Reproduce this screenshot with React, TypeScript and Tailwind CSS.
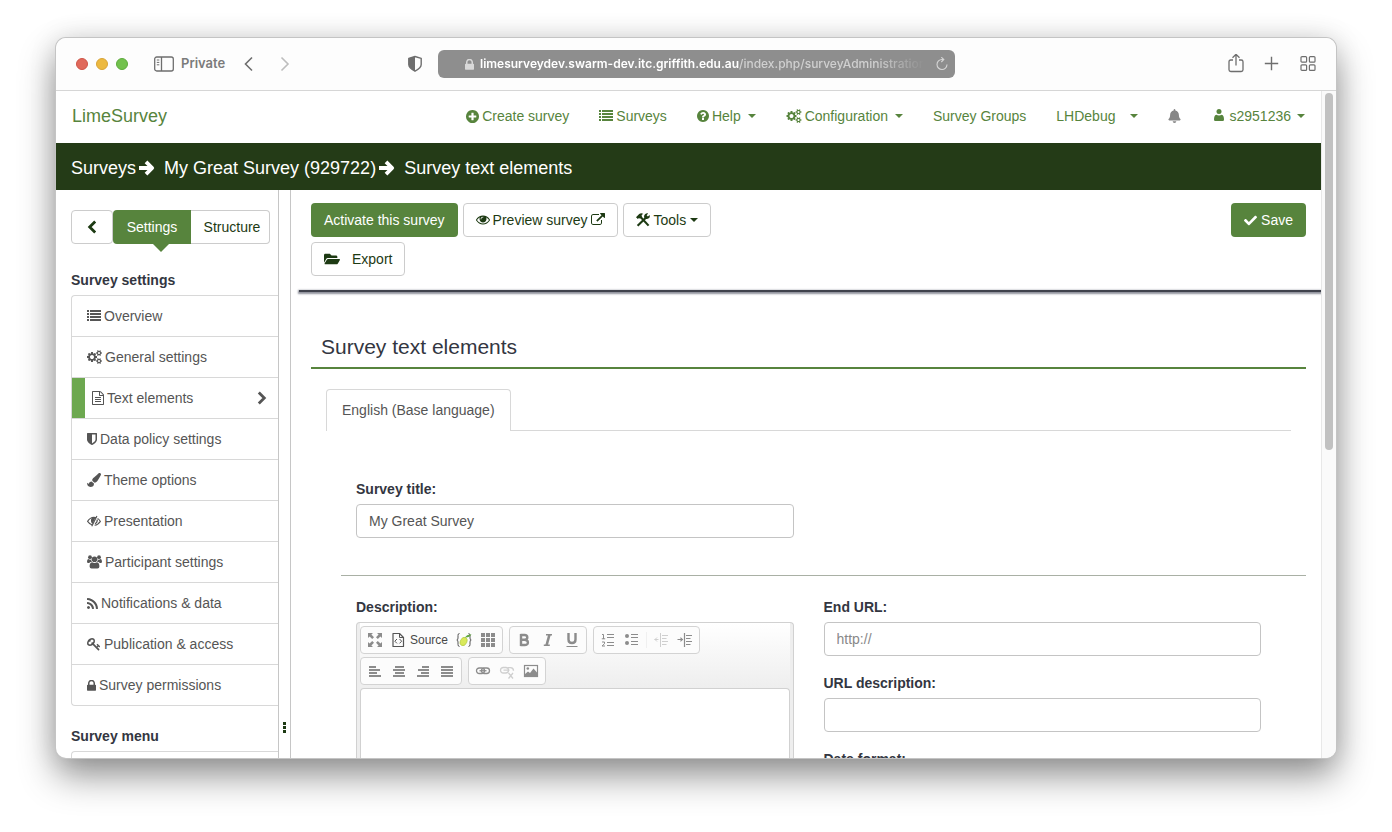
import type { ReactNode } from "react";
import { FaBell, FaCheck, FaFolderOpen, FaPaintBrush } from "react-icons/fa";

const COGS =
  "M896 896q0-106-75-181t-181-75-181 75-75 181 75 181 181 75 181-75 75-181zm768 512q0-52-38-90t-90-38-90 38-38 90q0 53 37.5 90.5t90.5 37.5 90.5-37.5 37.5-90.5zm0-1024q0-52-38-90t-90-38-90 38-38 90q0 53 37.5 90.5t90.5 37.5 90.5-37.5 37.5-90.5zm-384 421v185q0 10-7 19.5t-16 10.5l-155 24q-11 35-32 76 34 48 90 115 7 11 7 20 0 12-7 19-23 30-82.5 89.5t-78.5 59.5q-11 0-21-7l-115-90q-37 19-77 31-11 108-23 155-7 24-30 24h-186q-11 0-20-7.5t-10-17.5l-23-153q-34-10-75-31l-118 89q-7 7-20 7-11 0-21-8-144-133-144-160 0-9 7-19 10-14 41-53t47-61q-23-44-35-82l-152-24q-10-1-17-9.5t-7-19.5v-185q0-10 7-19.5t16-10.5l155-24q11-35 32-76-34-48-90-115-7-11-7-20 0-12 7-20 22-30 82-89t79-59q11 0 21 7l115 90q34-18 77-32 11-108 23-154 7-24 30-24h186q11 0 20 7.5t10 17.5l23 153q34 10 75 31l118-89q8-7 20-7 11 0 21 8 144 133 144 160 0 8-7 19-12 16-42 54t-45 60q23 48 34 82l152 23q10 2 17 10.5t7 19.5zm640 533v140q0 16-149 31-12 27-30 52 51 113 51 138 0 4-4 7-122 71-124 71-8 0-46-47t-52-68q-20 2-30 2t-30-2q-14 21-52 68t-46 47q-2 0-124-71-4-3-4-7 0-25 51-138-18-25-30-52-149-15-149-31v-140q0-16 149-31 13-29 30-52-51-113-51-138 0-4 4-7 4-2 35-20t59-34 30-16q8 0 46 46.5t52 67.5q20-2 30-2t30 2q51-71 92-112l6-2q4 0 124 70 4 3 4 7 0 25-51 138 17 23 30 52 149 15 149 31zm0-1024v140q0 16-149 31-12 27-30 52 51 113 51 138 0 4-4 7-122 71-124 71-8 0-46-47t-52-68q-20 2-30 2t-30-2q-14 21-52 68t-46 47q-2 0-124-71-4-3-4-7 0-25 51-138-18-25-30-52-149-15-149-31v-140q0-16 149-31 13-29 30-52-51-113-51-138 0-4 4-7 4-2 35-20t59-34 30-16q8 0 46 46.5t52 67.5q20-2 30-2t30 2q51-71 92-112l6-2q4 0 124 70 4 3 4 7 0 25-51 138 17 23 30 52 149 15 149 31z";
const KEY =
  "M832 512q0-80-56-136t-136-56-136 56-56 136q0 42 19 83-41-19-83-19-80 0-136 56t-56 136 56 136 136 56 136-56 56-136q0-42-19-83 41 19 83 19 80 0 136-56t56-136zm851 704q0 17-49 66t-66 49q-9 0-28.5-16t-36.5-33-38.5-40-24.5-26l-96 96 220 220q28 28 28 68 0 42-39 81t-81 39q-40 0-68-28l-671-671q-176 131-365 131-163 0-265.5-102.5t-102.5-265.5q0-160 95-313t248-248 313-95q163 0 265.5 102.5t102.5 265.5q0 189-131 365l355 355 96-96q-3-3-26-24.5t-40-38.5-33-36.5-16-28.5q0-17 49-66t66-49q13 0 23 10 6 6 46 44.5t82 79.5 86.5 86 73 78 28.5 41z";
const EYE =
  "M1664 960q-152-236-381-353 61 104 61 225 0 185-131.5 316.5t-316.5 131.5-316.5-131.5-131.5-316.5q0-121 61-225-229 117-381 353 133 205 333.5 326.5t434.5 121.5 434.5-121.5 333.5-326.5zm-720-384q0-20-14-34t-34-14q-125 0-214.5 89.5t-89.5 214.5q0 20 14 34t34 14 34-14 14-34q0-86 61-147t147-61q20 0 34-14t14-34zm848 384q0 34-20 69-140 230-376.5 368.5t-499.5 138.5-499.5-139-376.5-368q-20-35-20-69t20-69q140-229 376.5-368t499.5-139 499.5 139 376.5 368q20 35 20 69z";
const EXTERNAL =
  "M1408 928v320q0 119-84.5 203.5t-203.5 84.5h-832q-119 0-203.5-84.5t-84.5-203.5v-832q0-119 84.5-203.5t203.5-84.5h704q14 0 23 9t9 23v64q0 14-9 23t-23 9h-704q-66 0-113 47t-47 113v832q0 66 47 113t113 47h832q66 0 113-47t47-113v-320q0-14 9-23t23-9h64q14 0 23 9t9 23zm384-864v512q0 26-19 45t-45 19-45-19l-176-176-652 652q-10 10-23 10t-23-10l-114-114q-10-10-10-23t10-23l652-652-176-176q-19-19-19-45t19-45 45-19h512q26 0 45 19t19 45z";
const LOCK =
  "M640 768h512v-192q0-106-75-181t-181-75-181 75-75 181v192zm832 96v576q0 40-28 68t-68 28h-960q-40 0-68-28t-28-68v-576q0-40 28-68t68-28h32v-192q0-184 132-316t316-132 316 132 132 316v192h32q40 0 68 28t28 68z";
const RSS =
  "M576 1344q0 80-56 136t-136 56-136-56-56-136 56-136 136-56 136 56 56 136zm512 123q2 28-17 48-18 21-47 21h-135q-25 0-43-16.5t-20-41.5q-22-229-184.5-391.5t-391.5-184.5q-25-2-41.5-20t-16.5-43v-135q0-29 21-47 17-17 43-17h5q160 13 306 80.5t259 181.5q114 113 181.5 259t80.5 306zm512 2q2 27-18 47-18 20-46 20h-143q-26 0-44.5-17.5t-19.5-42.5q-12-215-101-408.5t-231.5-336-336-231.5-408.5-102q-25-1-42.5-19.5t-17.5-43.5v-143q0-28 20-46 18-18 44-18h3q262 13 501.5 120t425.5 294q187 186 294 425.5t120 501.5z";
const SHIELD =
  "M1344 960v-640h-448v1137q119-63 213-137 235-184 235-360zm192-768v768q0 86-33.5 170.5t-83 150-118 127.5-126.5 103-121 77.5-89.5 49.5-42.5 20q-12 6-26 6t-26-6q-16-7-42.5-20t-89.5-49.5-121-77.5-126.5-103-118-127.5-83-150-33.5-170.5v-768q0-26 19-45t45-19h1152q26 0 45 19t19 45z";
const FILE =
  "M1596 380q28 28 48 76t20 88v1152q0 40-28 68t-68 28h-1344q-40 0-68-28t-28-68v-1600q0-40 28-68t68-28h896q40 0 88 20t76 48zm-444-244v376h376q-10-29-22-41l-313-313q-12-12-41-22zm384 1528v-1024h-416q-40 0-68-28t-28-68v-416h-768v1536h1280zm-1024-864q0-14 9-23t23-9h704q14 0 23 9t9 23v64q0 14-9 23t-23 9h-704q-14 0-23-9t-9-23v-64zm736 224q14 0 23 9t9 23v64q0 14-9 23t-23 9h-704q-14 0-23-9t-9-23v-64q0-14 9-23t23-9h704zm0 256q14 0 23 9t9 23v64q0 14-9 23t-23 9h-704q-14 0-23-9t-9-23v-64q0-14 9-23t23-9h704z";
const QUESTION =
  "M1024 1376v-192q0-14-9-23t-23-9h-192q-14 0-23 9t-9 23v192q0 14 9 23t23 9h192q14 0 23-9t9-23zm256-672q0-88-55.5-163t-138.5-116-170-41q-243 0-371 213-15 24 8 42l132 100q7 6 19 6 16 0 25-12 53-68 86-92 34-24 86-24 48 0 85.5 26t37.5 59q0 38-20 61t-68 45q-63 28-115.5 86.5t-52.5 125.5v36q0 14 9 23t23 9h192q14 0 23-9t9-23q0-19 21.5-49.5t54.5-49.5q32-18 49-28.5t46-35 44.5-48 28-60.5 12.5-81zm384 192q0 209-103 385.5t-279.5 279.5-385.5 103-385.5-103-279.5-279.5-103-385.5 103-385.5 279.5-279.5 385.5-103 385.5 103 279.5 279.5 103 385.5z";
const PLUS =
  "M1344 960v-128q0-26-19-45t-45-19h-256v-256q0-26-19-45t-45-19h-128q-26 0-45 19t-19 45v256h-256q-26 0-45 19t-19 45v128q0 26 19 45t45 19h256v256q0 26 19 45t45 19h128q26 0 45-19t19-45v-256h256q26 0 45-19t19-45zm320-64q0 209-103 385.5t-279.5 279.5-385.5 103-385.5-103-279.5-279.5-103-385.5 103-385.5 279.5-279.5 385.5-103 385.5 103 279.5 279.5 103 385.5z";

function Glyph({ d, box, className }: { d: string; box: string; className: string }) {
  return (
    <svg viewBox={box} className={className} fill="currentColor" aria-hidden="true">
      <path d={d} />
    </svg>
  );
}

function ListIcon() {
  return (
    <svg viewBox="0 0 14 14" className="h-3.5 w-3.5" fill="currentColor" aria-hidden="true">
      <path d="M0 1h2v2H0zM3 1h11v2H3zM0 4h2v2H0zM3 4h11v2H3zM0 7h2v2H0zM3 7h11v2H3zM0 10h2v2H0zM3 10h11v2H3z" />
    </svg>
  );
}

function EyeSlash() {
  return (
    <svg viewBox="0 0 14 14" className="h-3.5 w-3.5" fill="none" stroke="currentColor" aria-hidden="true">
      <path d="M5.2 11Q2.4 10 .6 7.4Q3 3.4 7 3.3Q8.4 3.3 9.2 3.7M10.6 4.4Q12.4 5.6 13.4 7.4Q11.3 10.8 7.6 11.3" strokeWidth="1.1" />
      <path d="M9.9 2 4.8 12.3" strokeWidth="1.2" />
      <path d="M4.200 4.400Q3.300 8.300 5.600 9.900L8.200 4.200 6.500 3.600Z" fill="currentColor" stroke="none" />
      <path d="M10.300 5.600Q10.400 8.600 8 9.800" strokeWidth="1.200" />
    </svg>
  );
}

function UsersIcon() {
  return (
    <svg viewBox="0 0 15 14" className="h-3.5 w-[15px]" fill="currentColor" aria-hidden="true">
      <circle cx="3" cy="2.200" r="1.900" />
      <circle cx="12" cy="2.200" r="1.900" />
      <circle cx="7.500" cy="4.300" r="2.800" />
      <path d="M1.400 4Q3 5.200 4.200 4.400 4.200 6 5 7H3.400Q2.600 7.400 2.200 8H1.200Q0 8 0 6.800 0 4.200 1.400 4ZM13.600 4Q12 5.200 10.800 4.400 10.800 6 10 7h1.600q.8.4 1.200 1h1Q15 8 15 6.800 15 4.200 13.600 4ZM5 7.200q2.500 1.500 5 0 2.400.3 2.400 4.300 0 2-1.900 2h-6q-1.900 0-1.900-2 0-4 2.400-4.300Z" />
    </svg>
  );
}

function HammerWrench() {
  return (
    <svg viewBox="0 0 14 14" className="h-3.5 w-3.5" fill="none" stroke="currentColor" aria-hidden="true">
      <path d="M4.800 4.300 12.600 12.600" strokeWidth="2.100" />
      <path d="M0 4.200 3.200 1Q5.300-.3 7.400 1 5.500 1.300 5.600 2.600L6 3.800 4 5.700 3 5 1.800 6Z" fill="currentColor" stroke="none" />
      <path d="M1.600 12.800 9.600 5" strokeWidth="2.100" />
      <path d="M12.200.4 10.600 2.200l1.300 1.300L13.600 1.900Q14.300 4 12.800 5.300 11.200 6.500 9.600 5.900L8.200 4.500Q7.700 2.700 9 1.300 10.300 0 12.200.4Z" fill="currentColor" stroke="none" />
    </svg>
  );
}

function Caret() {
  return <span className="border-x-4 border-t-4 border-x-transparent border-t-current" />;
}

function RightArrow() {
  return (
    <svg viewBox="0 0 16 16" className="h-4 w-4" fill="none" stroke="currentColor" aria-hidden="true">
      <path d="M0 8h12" strokeWidth="4" />
      <path d="m7 1.800 6.200 6.200L7 14.200" strokeWidth="3.800" strokeLinejoin="round" />
    </svg>
  );
}

function UserIcon() {
  return (
    <svg viewBox="0 0 10 14" className="h-3.5 w-2.5" fill="currentColor" aria-hidden="true">
      <circle cx="5" cy="2.500" r="2.500" />
      <path d="M2.200 5.800Q5 7.400 7.800 5.800Q10 6.500 10 10.500Q10 12 8.800 12H1.200Q0 12 0 10.500Q0 6.500 2.200 5.800Z" />
    </svg>
  );
}

function TitleBar() {
  return (
    <header className="flex h-[53px] shrink-0 items-center border-b border-[#d6d6d6] bg-[#fdfdfd] px-5 font-[Inter,sans-serif] text-[#6e6e6e]">
      <div className="flex w-[362px] shrink-0 items-center">
        <div className="flex gap-2">
          <span className="h-3 w-3 rounded-full border border-[#cf5447] bg-[#e0695b]" />
          <span className="h-3 w-3 rounded-full border border-[#d9a437] bg-[#ecb940]" />
          <span className="h-3 w-3 rounded-full border border-[#5dab3c] bg-[#72c14d]" />
        </div>
        <button type="button" className="ml-[26px] flex items-center gap-[7px] text-[13px] font-semibold text-[#7b7b7b]">
          <svg viewBox="0 0 20 16" className="h-4 w-5" fill="none" stroke="#6e6e6e" aria-hidden="true">
            <rect x=".7" y="1" width="18.600" height="14" rx="2" strokeWidth="1.300" />
            <path d="M7.500 1v14" strokeWidth="1.300" />
            <path d="M2.800 4h2.500M2.800 6.400h2.500M2.800 8.800h2.500" />
          </svg>
          Private
        </button>
        <button type="button" aria-label="Back" className="ml-[18px]">
          <svg viewBox="0 0 12 16" className="h-4 w-3" fill="none" stroke="#6e6e6e" strokeWidth="1.600" aria-hidden="true">
            <path d="M9 1.500 2.500 8 9 14.500" />
          </svg>
        </button>
        <button type="button" aria-label="Forward" className="ml-6">
          <svg viewBox="0 0 12 16" className="h-4 w-3" fill="none" stroke="#bdbdbd" strokeWidth="1.600" aria-hidden="true">
            <path d="M2.500 1.500 9 8l-6.500 6.500" />
          </svg>
        </button>
        <svg viewBox="0 0 16 18" className="ml-auto mr-[15px] h-[18px] w-4" aria-hidden="true">
          <path d="M8 1.500 14.200 3.300V9.500q0 3.500-6.200 6.700Q1.800 13 1.800 9.500V3.300Z" fill="none" stroke="#6e6e6e" strokeWidth="1.400" strokeLinejoin="round" />
          <path d="M8 1.500V16.200Q1.800 13 1.800 9.500V3.300Z" fill="#6e6e6e" />
        </svg>
      </div>
      <div className="flex h-7 min-w-0 flex-1 items-center gap-1.5 rounded-md bg-[#8e8e8e] pl-[27px] pr-1.5 text-xs">
        <Glyph d={LOCK} box="320 192 1152 1344" className="h-[11px] w-[9px] shrink-0 text-[#d8d8d8]" />
        <span className="min-w-0 flex-1 overflow-hidden whitespace-nowrap text-[#d0d0d0] [mask-image:linear-gradient(to_right,black_88%,transparent_99%)]">
          <span className="font-semibold text-white">limesurveydev.swarm-dev.itc.griffith.edu.au</span>
          <span className="font-medium">/index.php/surveyAdministration</span>
        </span>
        <button type="button" aria-label="Reload" className="text-[#d6d6d6]">
          <svg viewBox="0 0 14 14" className="h-3.5 w-3.5" fill="none" stroke="currentColor" aria-hidden="true">
            <path d="M12 7.600A5 5 0 1 1 7 2.500h1.500M6.300.200l2.500 2.300L6.300 5" strokeWidth="1.100" />
          </svg>
        </button>
      </div>
      <div className="flex w-[361px] shrink-0 items-center justify-end gap-5">
        <button type="button" aria-label="Share">
          <svg viewBox="0 0 16 20" className="h-5 w-4" fill="none" stroke="currentColor" strokeWidth="1.300" aria-hidden="true">
            <path d="M5 6H2.800Q1 6 1 7.800v7.900q0 1.800 1.800 1.800h10.400q1.800 0 1.800-1.800V7.800Q15 6 13.200 6H11M8 11.500V.5M4.500 3.800 8 .3l3.500 3.500" />
          </svg>
        </button>
        <button type="button" aria-label="New tab">
          <svg viewBox="0 0 16 16" className="h-4 w-4" fill="none" stroke="currentColor" strokeWidth="1.400" aria-hidden="true">
            <path d="M7.500.8v13.400M.8 7.500h13.400" />
          </svg>
        </button>
        <button type="button" aria-label="Tab overview">
          <svg viewBox="0 0 16 16" className="h-4 w-4" fill="none" stroke="currentColor" strokeWidth="1.200" aria-hidden="true">
            <rect x="1" y=".6" width="5.600" height="5.600" rx="1" />
            <rect x="9.400" y=".6" width="5.600" height="5.600" rx="1" />
            <rect x="1" y="8.800" width="5.600" height="5.600" rx="1" />
            <rect x="9.400" y="8.800" width="5.600" height="5.600" rx="1" />
          </svg>
        </button>
      </div>
    </header>
  );
}

function NavLink({ children }: { children: ReactNode }) {
  return (
    <a href="#" className="flex items-center gap-[3px] whitespace-nowrap">
      {children}
    </a>
  );
}

function NavBar() {
  return (
    <nav className="flex h-[52px] shrink-0 items-center justify-between bg-white px-4 pb-0.5 text-sm text-[#57843d]">
      <a href="#" className="text-lg">LimeSurvey</a>
      <div className="flex items-center gap-[30px]">
        <NavLink>
          <Glyph d={PLUS} box="128 128 1536 1536" className="h-[13px] w-[13px]" />
          <span>Create survey</span>
        </NavLink>
        <NavLink>
          <ListIcon />
          <span>Surveys</span>
        </NavLink>
        <NavLink>
          <Glyph d={QUESTION} box="128 128 1536 1536" className="h-3 w-3" />
          <span className="mr-1">Help</span>
          <Caret />
        </NavLink>
        <NavLink>
          <Glyph d={COGS} box="0 0 1920 1792" className="h-3.5 w-4" />
          <span className="mr-1">Configuration</span>
          <Caret />
        </NavLink>
        <NavLink>Survey Groups</NavLink>
        <NavLink>
          <span className="mr-3">LHDebug</span>
          <Caret />
        </NavLink>
        <button type="button" aria-label="Notifications" className="mr-[3px] text-[#868686]">
          <FaBell className="h-3.5 w-[13px]" />
        </button>
        <NavLink>
          <UserIcon />
          <span className="ml-0.5 mr-[3px]">s2951236</span>
          <Caret />
        </NavLink>
      </div>
    </nav>
  );
}

const settings: { label: string; icon: ReactNode }[] = [
  { label: "Overview", icon: <ListIcon /> },
  { label: "General settings", icon: <Glyph d={COGS} box="0 0 1920 1792" className="h-3.5 w-[15px]" /> },
  { label: "Text elements", icon: <Glyph d={FILE} box="128 0 1536 1792" className="h-3.5 w-3" /> },
  { label: "Data policy settings", icon: <Glyph d={SHIELD} box="256 128 1280 1536" className="h-3 w-2.5" /> },
  { label: "Theme options", icon: <FaPaintBrush className="h-3.5 w-3.5" /> },
  { label: "Presentation", icon: <EyeSlash /> },
  { label: "Participant settings", icon: <UsersIcon /> },
  { label: "Notifications & data", icon: <Glyph d={RSS} box="192 128 1408 1408" className="h-[11px] w-[11px]" /> },
  { label: "Publication & access", icon: <Glyph d={KEY} box="0 0 1792 1792" className="h-3.5 w-3.5" /> },
  { label: "Survey permissions", icon: <Glyph d={LOCK} box="320 192 1152 1344" className="h-[11px] w-[9px]" /> },
];

function Sidebar() {
  return (
    <aside className="w-[223px] shrink-0 border-r border-[#c6c6c6] pl-[15px] pt-5 text-sm text-[#555]">
      <div className="mr-2 flex h-[34px] text-[#1d3a13]">
        <button type="button" aria-label="Collapse menu" className="flex w-[42px] items-center justify-center rounded border border-[#ccc]">
          <svg viewBox="0 0 10 14" className="h-3.5 w-2.5" fill="none" stroke="currentColor" strokeWidth="2.800" aria-hidden="true">
            <path d="M8.200 1.500 2.700 7l5.500 5.500" />
          </svg>
        </button>
        <button type="button" className="relative w-[78px] rounded-l bg-[#57843d] text-white">
          Settings
          <span className="absolute left-10 top-full border-x-8 border-t-8 border-x-transparent border-t-[#57843d]" />
        </button>
        <button type="button" className="flex-1 rounded-r border border-l-0 border-[#ccc] pl-1">Structure</button>
      </div>
      <h2 className="mt-[26px] font-bold leading-5 text-[#333641]">Survey settings</h2>
      <ul className="mt-[5px] rounded-l border-y border-l border-[#d8d8d8]">
        {settings.map((item) => {
          const active = item.label === "Text elements";
          return (
            <li key={item.label} className="border-b border-[#d8d8d8] last:border-b-0">
              <a
                href="#"
                className={
                  active
                    ? "flex h-10 items-center gap-[3px] border-l-[13px] border-[#6da850] pl-[7px] pr-[11px]"
                    : "flex h-10 items-center gap-[3px] pl-[15px]"
                }
              >
                {item.icon}
                <span>{item.label}</span>
                {active && (
                  <svg viewBox="0 0 10 14" className="ml-auto h-3.5 w-2.5" fill="none" stroke="currentColor" strokeWidth="2.800" aria-hidden="true">
                    <path d="M1.800 1.500 7.300 7l-5.500 5.500" />
                  </svg>
                )}
              </a>
            </li>
          );
        })}
      </ul>
      <h2 className="mt-5 font-bold leading-5 text-[#333641]">Survey menu</h2>
      <div className="mt-[5px] h-10 rounded-tl border-l border-t border-[#d8d8d8]" />
    </aside>
  );
}

function Tool({ label, off, children }: { label: string; off?: boolean; children: ReactNode }) {
  return (
    <button
      type="button"
      aria-label={label}
      disabled={off}
      className={off ? "flex h-6 w-6 items-center justify-center text-[#cfcfcf]" : "flex h-6 w-6 items-center justify-center text-[#8c8c8c]"}
    >
      <svg viewBox="0 0 16 16" className="h-4 w-4" fill="none" stroke="currentColor" aria-hidden="true">
        {children}
      </svg>
    </button>
  );
}

function ToolGroup({ children }: { children: ReactNode }) {
  return <div className="flex h-7 items-center rounded border border-[#d3d3d3] bg-[#fcfcfc] px-0.5">{children}</div>;
}

function Editor() {
  return (
    <div className="rounded-t border border-b-0 border-[#d1d1d1] bg-[#eee] px-[3px]">
      <div className="flex flex-col gap-[3px] bg-linear-to-b from-white to-[#eee] pb-[3px] pt-[3px]">
        <div className="flex gap-1.5">
          <ToolGroup>
            <Tool label="Maximize">
              <path d="M1 6V1h5L4.400 2.600 7 5.200 5.200 7 2.600 4.400ZM15 6V1h-5l1.600 1.600L9 5.200 10.800 7l2.600-2.600ZM1 10v5h5l-1.600-1.600L7 10.800 5.200 9l-2.600 2.600ZM15 10v5h-5l1.600-1.600L9 10.800 10.800 9l2.600 2.600Z" fill="currentColor" stroke="none" />
            </Tool>
            <button type="button" className="flex h-6 items-center gap-1 pl-[3px] pr-1 text-xs text-[#484848]">
              <svg viewBox="0 0 16 16" className="h-4 w-4" fill="none" stroke="#555" aria-hidden="true">
                <path d="M3 1.500h6.500L13.500 5.500v9H3Z" strokeWidth="1.200" strokeLinejoin="round" />
                <path d="M9.500 1.500v4h4M7 7 4.800 9.200 7 11.400M9.500 7l2.200 2.200-2.200 2.200" />
              </svg>
              Source
            </button>
            <Tool label="Placeholder fields">
              <path d="M3.500 1.500Q1.800 1.500 2 3.500v2.500Q2 8 .8 8 2 8 2 10v2.500q0 2 1.500 2M12.500 1.500q1.700 0 1.500 2v2.500q0 2 1.200 2-1.200 0-1.200 2v2.500q0 2-1.500 2" stroke="#555" />
              <ellipse cx="7.600" cy="9.500" rx="3.200" ry="4.300" transform="rotate(25 7.600 9.500)" fill="#d9e95a" stroke="#a9c433" strokeWidth=".6" />
              <path d="M9 5.500Q11 2 15.500 2.500 13.500 5.800 9 5.500Z" fill="#62a744" stroke="none" />
            </Tool>
            <Tool label="Show blocks">
              <path d="M1 1h4v4H1zM6 1h4v4H6zM11 1h4v4h-4zM1 6h4v4H1zM6 6h4v4H6zM11 6h4v4h-4zM1 11h4v4H1zM6 11h4v4H6zM11 11h4v4h-4z" fill="currentColor" stroke="none" />
            </Tool>
          </ToolGroup>
          <ToolGroup>
            <Tool label="Bold">
              <path d="M4.500 3h4q2.800 0 2.800 2.400 0 2.300-2.800 2.300h-4M8.500 7.700q3.400 0 3.400 2.700T8.500 13h-4M5 2v12" strokeWidth="2.400" />
            </Tool>
            <Tool label="Italic">
              <path d="M6 2.800h6M3.800 13.200h6" strokeWidth="1.600" />
              <path d="M9.500 2.500 6.500 13.500" strokeWidth="2.600" />
            </Tool>
            <Tool label="Underline">
              <path d="M4.500 1v6.500q0 3.500 3.500 3.500t3.500-3.500V1" strokeWidth="2.400" />
              <path d="M2.500 14.500h11" />
            </Tool>
          </ToolGroup>
          <ToolGroup>
            <Tool label="Numbered list">
              <path d="M2 2.500h1.500V7M1.800 6.800h3.400M2 10h2.500v1.700L2 14h3" />
              <path d="M7 2.500h7M7 5.500h7M7 10.500h7M7 13.500h7" />
            </Tool>
            <Tool label="Bulleted list">
              <circle cx="3" cy="4" r="2" fill="currentColor" stroke="none" />
              <circle cx="3" cy="11" r="2" fill="currentColor" stroke="none" />
              <path d="M7 2.500h7M7 5.500h7M7 9.500h7M7 12.500h7" />
            </Tool>
            <span className="mx-0.5 h-4 w-px bg-[#f0f0f0]" />
            <Tool label="Decrease indent" off>
              <path d="M7.500 1v14M9 3.500h6M9 6.500h4.500M9 9.500h6M9 12.500h4.500M5.500 7.500h-4M4 5.500 2 7.500 4 9.500" />
            </Tool>
            <Tool label="Increase indent">
              <path d="M7.500 1v14M9 3.500h6M9 6.500h4.500M9 9.500h6M9 12.500h4.500M.5 7.500h5" strokeWidth="1.200" />
              <path d="M3.500 5 6.200 7.500 3.500 10Z" fill="currentColor" stroke="none" />
            </Tool>
          </ToolGroup>
        </div>
        <div className="flex gap-1.5">
          <ToolGroup>
            <Tool label="Align left">
              <path d="M2 4h7M2 7h11M2 10h8M2 13h12" strokeWidth="1.900" />
            </Tool>
            <Tool label="Center">
              <path d="M4 4h9M2 7h12M4 10h9M2 13h12" strokeWidth="1.900" />
            </Tool>
            <Tool label="Align right">
              <path d="M7 4h7M3 7h11M6 10h8M2 13h12" strokeWidth="1.900" />
            </Tool>
            <Tool label="Justify">
              <path d="M2 4h12M2 7h12M2 10h12M2 13h12" strokeWidth="1.900" />
            </Tool>
          </ToolGroup>
          <ToolGroup>
            <Tool label="Link">
              <rect x="1.500" y="5" width="8" height="5.500" rx="2.750" strokeWidth="1.300" />
              <rect x="6.500" y="5" width="8" height="5.500" rx="2.750" strokeWidth="1.300" />
              <path d="M4.500 7.750h7" strokeWidth="1.300" />
            </Tool>
            <Tool label="Unlink" off>
              <rect x="1.500" y="4.500" width="8" height="5.500" rx="2.750" strokeWidth="1.300" />
              <path d="M9 4.700h2.500q3 .3 3 3M4.500 7.200h6M9.500 10l4.500 5.500M14 10 9.500 15.500" strokeWidth="1.300" />
            </Tool>
            <Tool label="Image">
              <rect x="1.500" y="2.500" width="13" height="11" strokeWidth="1.200" />
              <circle cx="4.800" cy="5.500" r="1.300" fill="currentColor" stroke="none" />
              <path d="M2 13V11l3-2.500 2 1.500 3.500-4.500L14 9.500V13Z" fill="currentColor" stroke="none" />
            </Tool>
          </ToolGroup>
        </div>
      </div>
      <textarea id="description" className="block h-24 w-full resize-none rounded-t-sm border border-b-0 border-[#d1d1d1] bg-white p-2 outline-none" />
    </div>
  );
}

const button = "flex h-[34px] items-center rounded border border-[#ccc] bg-white px-3";
const primary = "flex h-[34px] items-center rounded bg-[#57843d] px-[13px] text-white";
const field = "block h-[34px] w-full rounded border border-[#c4c4c4] bg-white px-3 text-sm text-[#555] outline-none placeholder:text-[#888]";
const label = "block pb-[5px] text-sm font-bold leading-5 text-[#333641]";

function MainPane() {
  return (
    <main className="min-w-0 flex-1 text-sm">
      <div className="pb-[14px] pl-5 pr-[15px] pt-[13px] text-[#1d3a13]">
        <div className="flex items-start justify-between">
          <div className="flex flex-col items-start gap-[5px]">
            <div className="flex gap-[5px]">
              <button type="button" className={primary}>Activate this survey</button>
              <button type="button" className={`${button} gap-[3px]`}>
                <Glyph d={EYE} box="0 64 1792 1792" className="h-3.5 w-3.5" />
                Preview survey
                <Glyph d={EXTERNAL} box="0 0 1792 1792" className="h-3.5 w-3.5" />
              </button>
              <button type="button" className={`${button} gap-1`}>
                <HammerWrench />
                Tools
                <Caret />
              </button>
            </div>
            <button type="button" className={`${button} gap-3`}>
              <FaFolderOpen className="h-4 w-4" />
              Export
            </button>
          </div>
          <button type="button" className={`${primary} gap-1`}>
            <FaCheck className="h-[13px] w-[13px]" />
            Save
          </button>
        </div>
      </div>
      <div className="ml-2 h-0.5 bg-[#3f424c] shadow-[0_1px_2px_1px_#8f919b]" />
      <div className="pl-5 pr-[15px] pt-[43px]">
        <h1 className="border-b-2 border-[#57843d] pb-2 pl-2.5 text-[21px] leading-6 text-[#333641]">Survey text elements</h1>
        <div className="mx-[15px] mt-5 flex border-b border-[#d8d8d8]">
          <button type="button" className="-mb-px h-[42px] rounded-t border border-b-0 border-[#d8d8d8] bg-white px-[15px] pb-0.5 text-[#555]">
            English (Base language)
          </button>
        </div>
        <form className="pt-12">
          <div className="grid grid-cols-2 gap-[30px] px-[45px]">
            <div>
              <label htmlFor="title" className={label}>Survey title:</label>
              <input id="title" type="text" defaultValue="My Great Survey" className={field} />
            </div>
          </div>
          <hr className="ml-[30px] mt-[37px] border-[#a9b0a5]" />
          <div className="mt-[21px] grid grid-cols-2 gap-[30px] px-[45px]">
            <div>
              <label htmlFor="description" className={label}>Description:</label>
              <Editor />
            </div>
            <div className="flex flex-col gap-[17px]">
              <div>
                <label htmlFor="end-url" className={label}>End URL:</label>
                <input id="end-url" type="text" placeholder="http://" className={field} />
              </div>
              <div>
                <label htmlFor="url-description" className={label}>URL description:</label>
                <input id="url-description" type="text" className={field} />
              </div>
              <div>
                <label htmlFor="date-format" className={label}>Date format:</label>
                <input id="date-format" type="text" className={field} />
              </div>
            </div>
          </div>
        </form>
      </div>
    </main>
  );
}

export default function App() {
  return (
    <div className="flex h-screen bg-white px-14 pb-[74px] pt-[38px] font-['Liberation_Sans',Arial,sans-serif]">
      <div className="flex min-w-0 flex-1 flex-col overflow-hidden rounded-[10px] bg-white shadow-[0_0_0_1px_#c4c4c4,0_18px_36px_rgba(0,0,0,0.42),0_0_28px_rgba(0,0,0,0.12)]">
        <TitleBar />
        <div className="flex min-h-0 flex-1">
          <div className="flex min-w-0 flex-1 flex-col overflow-hidden">
            <NavBar />
            <div className="flex h-[47px] shrink-0 items-center gap-[3px] bg-[#243b17] px-[15px] pt-0.5 text-lg text-white">
              <a href="#">Surveys</a>
              <RightArrow />
              <a href="#" className="ml-1.5">My Great Survey (929722)</a>
              <RightArrow />
              <span className="ml-1.5">Survey text elements</span>
            </div>
            <div className="flex min-h-0 flex-1">
              <Sidebar />
              <div className="flex w-3 shrink-0 flex-col items-center gap-px border-r border-[#c6c6c6] pt-[532px]">
                <span className="h-[3px] w-[3px] shrink-0 bg-[#1d3a13]" />
                <span className="h-[3px] w-[3px] shrink-0 bg-[#1d3a13]" />
                <span className="h-[3px] w-[3px] shrink-0 bg-[#1d3a13]" />
              </div>
              <MainPane />
            </div>
          </div>
          <div className="w-[15px] shrink-0 border-l border-[#e8e8e8] bg-[#fafafa] pl-[3px] pt-0.5">
            <div className="h-[357px] w-2 rounded-full bg-[#c1c1c1]" />
          </div>
        </div>
      </div>
    </div>
  );
}
